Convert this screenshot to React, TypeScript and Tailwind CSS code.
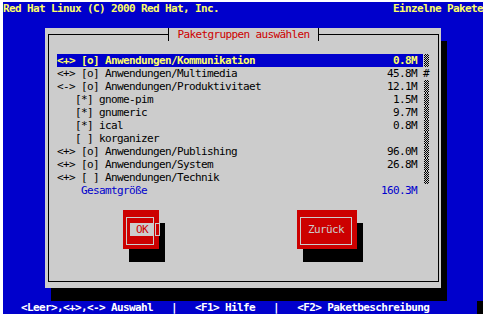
const groups = [
  { label: "<+> [o] Anwendungen/Kommunikation", size: "0.8M", sub: false, selected: true, thumb: false },
  { label: "<+> [o] Anwendungen/Multimedia", size: "45.8M", sub: false, selected: false, thumb: true },
  { label: "<-> [o] Anwendungen/Produktivitaet", size: "12.1M", sub: false, selected: false, thumb: false },
  { label: "[*] gnome-pim", size: "1.5M", sub: true, selected: false, thumb: false },
  { label: "[*] gnumeric", size: "9.7M", sub: true, selected: false, thumb: false },
  { label: "[*] ical", size: "0.8M", sub: true, selected: false, thumb: false },
  { label: "[ ] korganizer", size: "", sub: true, selected: false, thumb: false },
  { label: "<+> [o] Anwendungen/Publishing", size: "96.0M", sub: false, selected: false, thumb: false },
  { label: "<+> [o] Anwendungen/System", size: "26.8M", sub: false, selected: false, thumb: false },
  { label: "<+> [ ] Anwendungen/Technik", size: "", sub: false, selected: false, thumb: false },
];

function Button({ label, width, focused }: { label: string; width: string; focused?: boolean }) {
  return (
    <div className={`relative h-[39px] bg-[#cc0000] pt-[7px] pl-[3px] shadow-[6px_13px_0_0_#000] ${width}`}>
      <div className="h-[28px] w-[calc(100%-5px)] border border-[#cccccc] pt-[5px] pl-[3px] pr-[3px]">
        <div
          className={
            focused
              ? "flex h-[13px] w-[24px] items-center justify-center bg-[#cccccc] text-[#cc0000]"
              : "flex h-[13px] items-center justify-center text-[#cccccc]"
          }
        >
          {label}
        </div>
      </div>
      {focused && (
        <div className="absolute left-[32px] top-[13px] h-[13px] w-[5px] border border-[#cccccc]" />
      )}
    </div>
  );
}

export default function App() {
  return (
    <div className="min-h-screen bg-white pt-[2px] pl-[3px] font-['DejaVu_Sans_Mono',monospace] text-[11px] leading-[13px] tracking-[-0.62px]">
      <div className="flex h-[312px] w-[480px] flex-col bg-[#0000cc]">
        <div className="flex h-[13px] justify-between whitespace-pre font-bold text-[#ffff66]">
          <span>Red Hat Linux (C) 2000 Red Hat, Inc.</span>
          <span>Einzelne Pakete</span>
        </div>

        <div className="ml-[42px] mt-[13px] h-[260px] w-[396px] bg-[#cccccc] pl-[3px] pt-[6px] shadow-[6px_13px_0_0_#000]">
          <div className="relative h-[248px] w-[391px] border border-black pl-[8px] pt-[19px]">
            <div className="absolute left-[119px] top-[-7px] flex h-[13px] w-[151px] items-center justify-center border-x border-black bg-[#cccccc] text-[#cc0000]">
              Paketgruppen auswählen
            </div>

            <div className="flex flex-col whitespace-pre">
              {groups.map((g) => (
                <div key={g.label} className="flex h-[13px]">
                  <div
                    className={`flex w-[366px] justify-between pr-[6px] ${
                      g.selected ? "bg-[#0000cc] font-bold text-[#ffff66]" : "text-black"
                    } ${g.sub ? "pl-[18px]" : ""}`}
                  >
                    <span>{g.label}</span>
                    <span>{g.size}</span>
                  </div>
                  {g.thumb ? (
                    <div className="w-[6px] text-black">#</div>
                  ) : (
                    <div className="ml-[1px] w-[5px] bg-[repeating-conic-gradient(#000_0%_25%,#cccccc_0%_50%)] bg-[length:2px_2px]" />
                  )}
                </div>
              ))}
              <div className="flex h-[13px] w-[366px] justify-between pl-[24px] pr-[6px] text-[#0000cc]">
                <span>Gesamtgröße</span>
                <span>160.3M</span>
              </div>
            </div>

            <div className="mt-[13px] flex pl-[66px]">
              <Button label="OK" width="w-[36px]" focused />
              <div className="w-[138px]" />
              <Button label="Zurück" width="w-[60px]" />
            </div>
          </div>
        </div>

        <div className="mt-[13px] flex h-[13px] whitespace-pre font-bold text-white">
          <span>   {"<Leer>,<+>,<-> Auswahl   |   <F1> Hilfe   |   <F2> Paketbeschreibung"}</span>
          <div className="ml-auto h-[13px] w-[6px] bg-black" />
        </div>
      </div>
    </div>
  );
}
